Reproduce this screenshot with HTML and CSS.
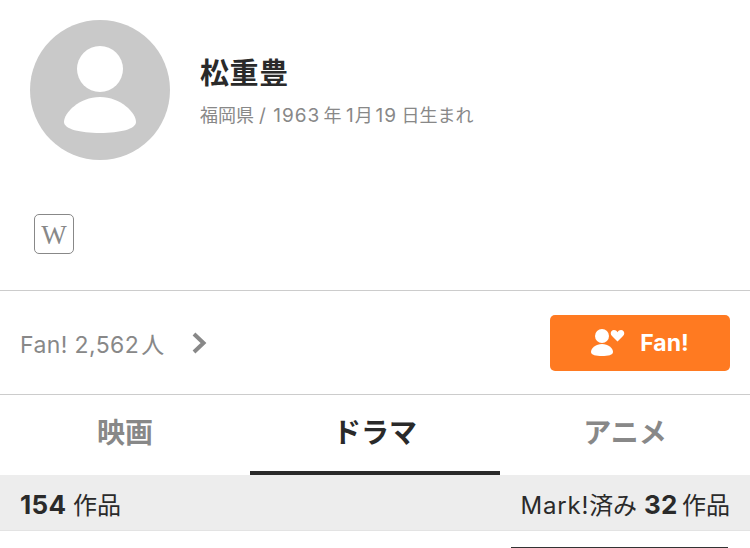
FILE: index.html
```html
<!DOCTYPE html>
<html lang="ja">
<head>
    <meta charset="UTF-8">
    <title>松重豊</title>
    <link rel="stylesheet" href="styles.css">
</head>
<body>
    <div class="profile">
        <svg class="avatar" viewBox="0 0 140 140">
            <circle cx="70" cy="70" r="70" fill="#c9c9c9"/>
            <circle cx="70" cy="49" r="23" fill="#fff"/>
            <path d="M70 77C91 77 106 93 106 102C106 109 90 113 70 113C50 113 34 109 34 102C34 93 49 77 70 77Z" fill="#fff"/>
        </svg>
        <div class="info">
            <h1>松重豊</h1>
            <p>福岡県 <span class="num">/ 1963</span>&#8201;年<span class="num">&#8201;1</span>月<span class="num">&#8202;19&#8201;</span>日生まれ</p>
        </div>
    </div>
    <div class="links">
        <a class="wiki">W</a>
    </div>
    <div class="fan-row">
        <div class="fan-count">
            <span><span class="num">Fan! 2,562</span>&#8202;人</span>
            <svg class="chevron" viewBox="0 0 16 24">
                <path d="M2 3l9.500 9-9.500 9" fill="none" stroke="#888" stroke-width="4"/>
            </svg>
        </div>
        <button class="fan-button">
            <svg class="fan-icon" viewBox="0 0 34 28">
                <circle cx="11" cy="7" r="7" fill="#fff"/>
                <path d="M11 15C17 15 22 19 22 23C22 26 17 27 11 27C5 27 0 26 0 23C0 19 5 15 11 15Z" fill="#fff"/>
                <path d="M26.500 12.500L21 7C18.500 4.500 20 1 23 1C24.500 1 25.700 1.800 26.500 3.200C27.300 1.800 28.500 1 30 1C33 1 34.500 4.500 32 7Z" fill="#fff"/>
            </svg>
            Fan!
        </button>
    </div>
    <div class="tabs">
        <div class="tab">映画</div>
        <div class="tab active">ドラマ</div>
        <div class="tab">アニメ</div>
    </div>
    <div class="counts">
        <div><b>154</b> 作品</div>
        <div><span class="num">Mark!</span>済み <b>32</b>&#8201;作品</div>
    </div>
    <div class="posters">
        <div class="poster"></div>
    </div>
</body>
</html>
```

FILE: styles.css
```css
body {
    margin: 0;
    height: 548px;
    overflow: hidden;
    background-color: #fff;
    color: #2a2a2a;
    font-family: Inter, "Noto Sans CJK JP", sans-serif;
}

.num {
    letter-spacing: 0.4px;
}

.profile {
    display: flex;
    align-items: center;
    gap: 30px;
    padding: 20px 30px 0;
}

.avatar {
    width: 140px;
    height: 140px;
    display: block;
}

.info {
    margin-top: 2px;
}

.info h1 {
    margin: 0;
    font-size: 29px;
    line-height: 40px;
    font-weight: 700;
    letter-spacing: 0.6px;
}

.info p {
    margin: 9px 0 0;
    font-size: 18px;
    line-height: 26px;
    color: #888;
}

.info .num {
    font-size: 19px;
    letter-spacing: 1px;
}

.links {
    padding: 54px 34px 36px;
}

.wiki {
    display: block;
    box-sizing: border-box;
    width: 40px;
    height: 40px;
    border: 1px solid #888;
    border-radius: 5px;
    text-align: center;
    font-family: "Liberation Serif", serif;
    font-size: 27px;
    line-height: 40px;
    color: #888;
}

.fan-row {
    display: flex;
    justify-content: space-between;
    align-items: center;
    height: 103px;
    padding: 0 20px;
    border-top: 1px solid #ccc;
    border-bottom: 1px solid #ccc;
}

.fan-count {
    display: flex;
    align-items: center;
    gap: 28px;
    font-size: 23px;
    color: #888;
}

.chevron {
    width: 16px;
    height: 24px;
}

.fan-button {
    display: flex;
    align-items: center;
    justify-content: center;
    gap: 15px;
    width: 180px;
    height: 56px;
    border: none;
    border-radius: 5px;
    background-color: #ff7a21;
    color: #fff;
    font-family: inherit;
    font-size: 23px;
    font-weight: 700;
}

.fan-icon {
    width: 34px;
    height: 28px;
}

.tabs {
    display: flex;
    height: 80px;
}

.tab {
    flex: 1;
    box-sizing: border-box;
    text-align: center;
    font-size: 28px;
    line-height: 76px;
    font-weight: 700;
    color: #888;
}

.tab.active {
    color: #2a2a2a;
    border-bottom: 4px solid #2a2a2a;
}

.counts {
    display: flex;
    justify-content: space-between;
    align-items: center;
    box-sizing: border-box;
    height: 56px;
    padding: 2px 20px 0;
    background-color: #ededed;
    border-bottom: 1px solid #e3e3e3;
    font-size: 24px;
}

.counts .num {
    letter-spacing: 0.8px;
}

.counts b {
    font-size: 26px;
    font-weight: 700;
    letter-spacing: 0.3px;
}

.posters {
    display: flex;
    justify-content: flex-end;
    padding: 16px 22px 0 0;
}

.poster {
    width: 217px;
    height: 1px;
    background-color: #333;
}
```
